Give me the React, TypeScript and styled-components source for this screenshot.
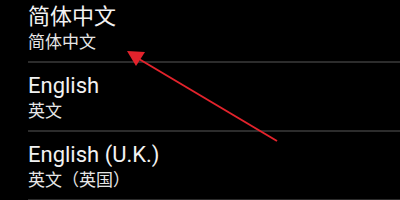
import React from "react";
import styled, { createGlobalStyle } from "styled-components";

const Global = createGlobalStyle`
  html, body { margin: 0; padding: 0; background: #000; }
  body { width: 400px; height: 200px; overflow: hidden; }
`;

const Screen = styled.div`
  position: relative;
  width: 400px;
  height: 200px;
  overflow: hidden;
  background: #000;
  font-family: Roboto, "Noto Sans CJK SC", sans-serif;
`;

const List = styled.ul`
  list-style: none;
  margin: -6px 0 0 0;
  padding: 0 0 0 28px;
`;

const Row = styled.li`
  display: flex;
  flex-direction: column;
  padding: 9px 0 8px 0;
  border-bottom: 2px solid #2c2c2c;
`;

const Title = styled.div`
  font-size: 22px;
  line-height: 28px;
  color: #f2f2f2;
`;

const Subtitle = styled.div`
  font-size: 17px;
  line-height: 22px;
  color: #e6e6e6;
`;

const Arrow = styled.svg`
  position: absolute;
  left: 0;
  top: 0;
  pointer-events: none;
`;

const items = [
  { title: "简体中文", sub: "简体中文" },
  { title: "English", sub: "英文" },
  { title: "English (U.K.)", sub: "英文（英国）" },
];

export default function App() {
  return (
    <Screen>
      <Global />
      <List>
        {items.map((it) => (
          <Row key={it.title}>
            <Title>{it.title}</Title>
            <Subtitle>{it.sub}</Subtitle>
          </Row>
        ))}
      </List>
      <Arrow width="400" height="200" viewBox="0 0 400 200">
        <line x1="277" y1="141" x2="139" y2="59" stroke="#e3232c" strokeWidth="2" />
        <polygon points="127,51 145,52 136,66" fill="#e3232c" />
      </Arrow>
    </Screen>
  );
}
